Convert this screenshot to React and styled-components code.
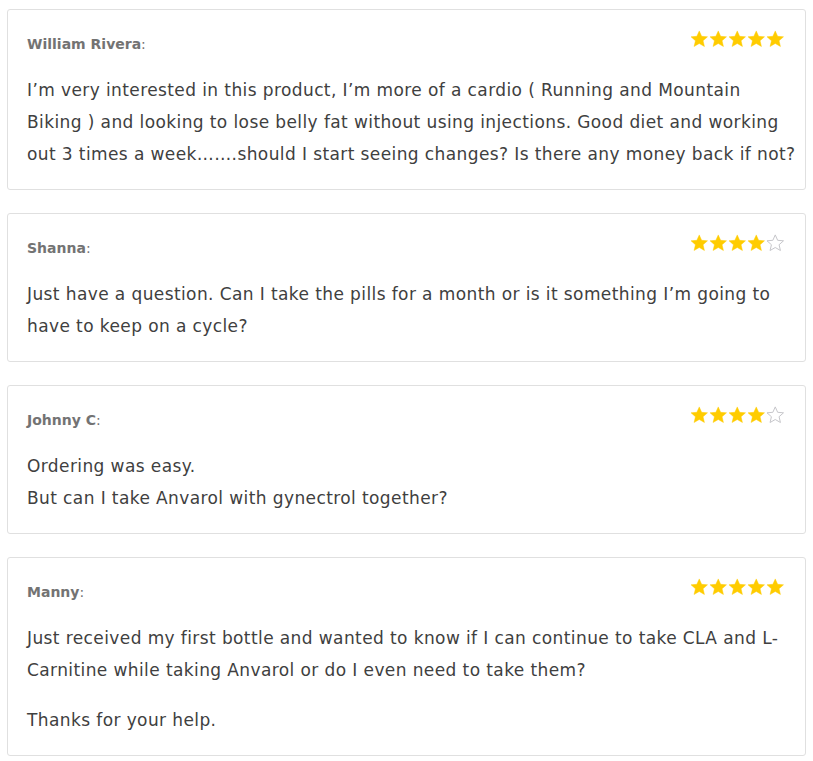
import styled, { createGlobalStyle } from "styled-components";

const GlobalStyle = createGlobalStyle`
  body {
    margin: 0;
    background: #fff;
    font-family: "DejaVu Sans", "Open Sans", sans-serif;
  }
`;

const reviews = [
  {
    name: "William Rivera",
    rating: 5,
    paragraphs: [
      "I’m very interested in this product, I’m more of a cardio ( Running and Mountain Biking ) and looking to lose belly fat without using injections. Good diet and working out 3 times a week…….should I start seeing changes? Is there any money back if not?",
    ],
  },
  {
    name: "Shanna",
    rating: 4,
    paragraphs: [
      "Just have a question. Can I take the pills for a month or is it something I’m going to have to keep on a cycle?",
    ],
  },
  {
    name: "Johnny C",
    rating: 4,
    paragraphs: ["Ordering was easy.\nBut can I take Anvarol with gynectrol together?"],
  },
  {
    name: "Manny",
    rating: 5,
    paragraphs: [
      "Just received my first bottle and wanted to know if I can continue to take CLA and L-Carnitine while taking Anvarol or do I even need to take them?",
      "Thanks for your help.",
    ],
  },
];

const List = styled.div`
  padding: 9px 7px;
  display: flex;
  flex-direction: column;
  gap: 23px;
`;

const Card = styled.div`
  border: 1px solid #e0e0e0;
  border-radius: 3px;
  padding: 20px 6px 19px 19px;
`;

const Header = styled.div`
  display: flex;
  justify-content: space-between;
  align-items: flex-start;
  height: 24px;
`;

const Name = styled.div`
  margin-top: 4px;
  font-size: 14px;
  line-height: 20px;
  color: #737373;

  strong {
    font-weight: 700;
  }
`;

const Stars = styled.div`
  display: flex;
  gap: 0.5px;
  margin-right: 15px;
`;

const Body = styled.div`
  margin-top: 20px;
  font-size: 17px;
  line-height: 32px;
  color: #404040;
  letter-spacing: 0.4px;

  p {
    margin: 0;
    white-space: pre-line;
  }

  p + p {
    margin-top: 18px;
  }
`;

const Star = ({ filled }) => (
  <svg width="18.5" height="18" viewBox="0 0 24 24">
    <path
      d="M12 1.2l3.2 7.2 7.8.7-5.9 5.2 1.8 7.7L12 18l-6.9 4 1.8-7.7-5.9-5.2 7.8-.7z"
      fill={filled ? "#ffcc00" : "#fff"}
      stroke={filled ? "#ffcc00" : "#c4c4c8"}
      strokeWidth={filled ? 0.6 : 1.3}
      strokeLinejoin="round"
    />
  </svg>
);

const Review = ({ review }) => (
  <Card>
    <Header>
      <Name>
        <strong>{review.name}</strong>:
      </Name>
      <Stars>
        {[1, 2, 3, 4, 5].map((i) => (
          <Star key={i} filled={i <= review.rating} />
        ))}
      </Stars>
    </Header>
    <Body>
      {review.paragraphs.map((p, i) => (
        <p key={i}>{p}</p>
      ))}
    </Body>
  </Card>
);

export default function App() {
  return (
    <>
      <GlobalStyle />
      <List>
        {reviews.map((r) => (
          <Review key={r.name} review={r} />
        ))}
      </List>
    </>
  );
}
